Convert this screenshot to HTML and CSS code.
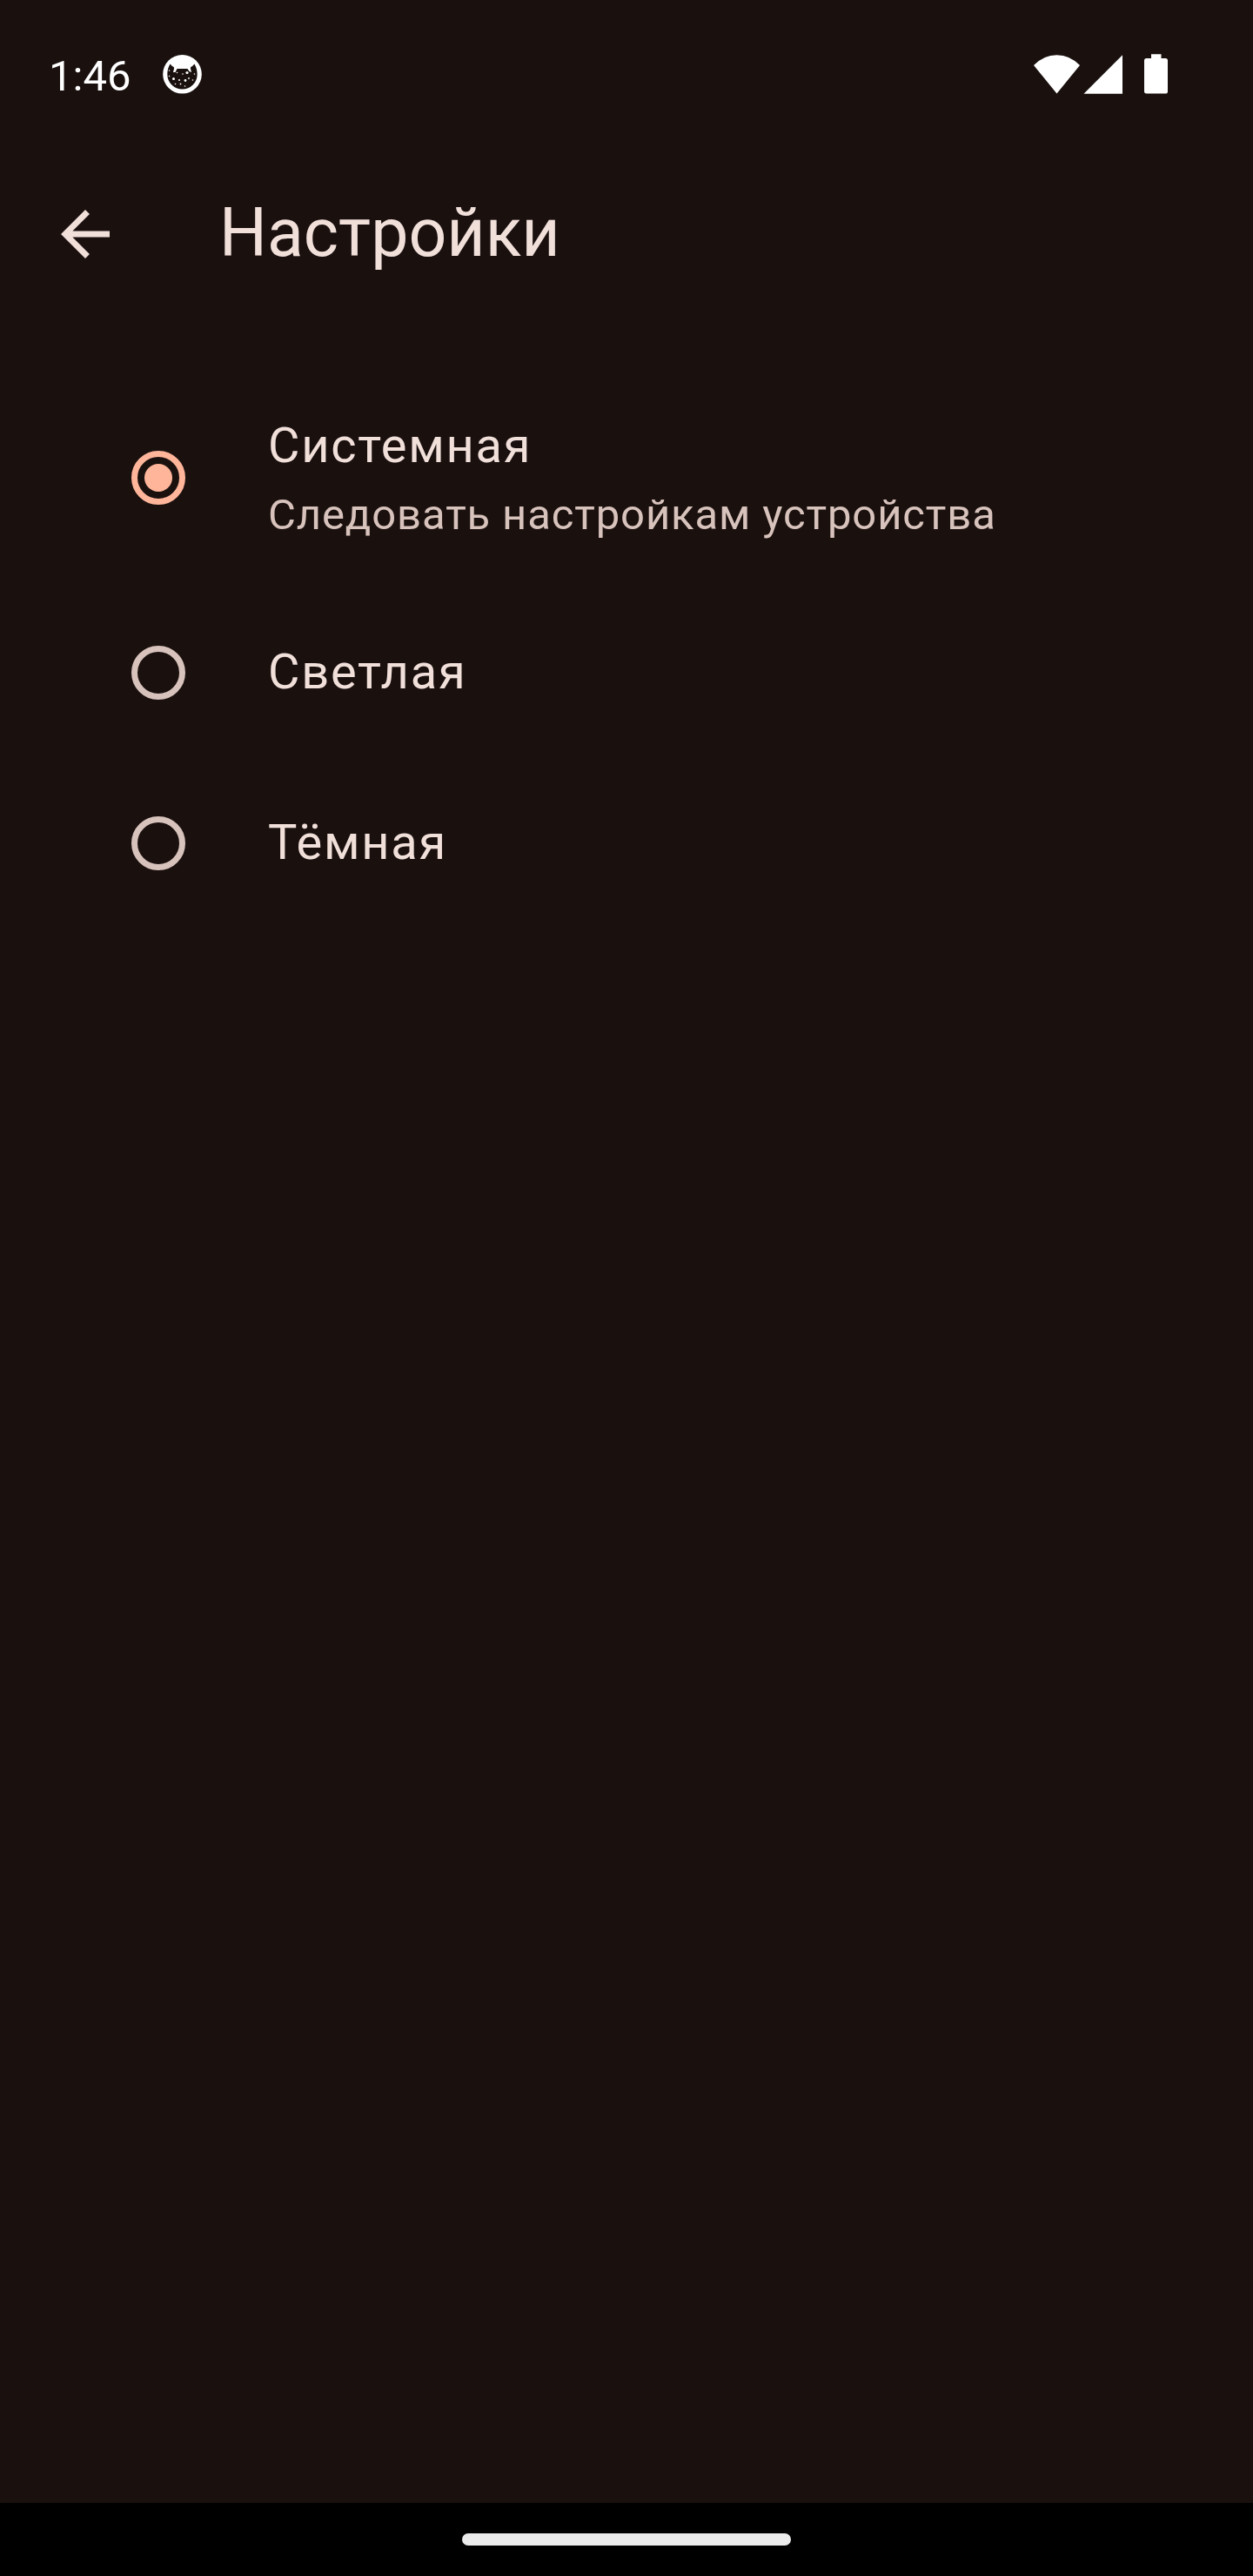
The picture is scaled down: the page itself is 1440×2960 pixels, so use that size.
FILE: index.html
```html
<!DOCTYPE html>
<html lang="ru">
<head>
<meta charset="utf-8">
<title>Настройки</title>
<link rel="stylesheet" href="styles.css">
</head>
<body>
<div class="screen">
  <header class="status">
    <div class="status-left">
      <span class="time">1:46</span>
      <svg class="cat" width="46" height="46" viewBox="0 0 46 46">
        <circle cx="22.500" cy="23.300" r="22.300" fill="#fff"/>
        <path d="M8.500 11.500C11 14.500 15 17 18 17H27C30 17 34 14.500 36.500 11.500C38.500 15 39.700 19 39.700 23.300A17.200 17.200 0 0 1 5.300 23.300C5.300 19 6.500 15 8.500 11.500Z" fill="#1a110f"/>
        <path d="M13 12V17L12 21H14.500L16.500 17L20 16V12ZM32 12V17L33 21L30.500 20L28.500 17L25 16V12Z" fill="#fff"/>
        <g fill="#fff">
          <circle cx="28" cy="21.500" r="1.600"/><circle cx="12.500" cy="28.500" r="1.500"/><circle cx="26" cy="30.500" r="1.400"/>
          <circle cx="7.500" cy="25.500" r=".8"/><circle cx="7.500" cy="19" r=".8"/><circle cx="19" cy="30" r="1"/><circle cx="16.500" cy="21.500" r=".8"/>
          <circle cx="23" cy="23" r=".8"/><circle cx="30" cy="28" r=".9"/><circle cx="34.500" cy="30" r=".8"/><circle cx="36.500" cy="23" r=".8"/>
          <circle cx="20.500" cy="34.500" r=".9"/><circle cx="14.500" cy="34.500" r=".8"/><circle cx="25.500" cy="37" r=".8"/>
        </g>
      </svg>
    </div>
    <svg class="indicators" width="154" height="46" viewBox="0 0 154 46" fill="#fff">
      <path d="M26.500 45.500L0 13Q11.500 1.200 26.500 1.200T53 13Z"/>
      <path d="M57.500 45.700L102 1.200V45.700Z"/>
      <path d="M135 .2H146.500V5H151.500A2.500 2.500 0 0 1 154 7.500V43A2.500 2.500 0 0 1 151.500 45.600H129.500A2.500 2.500 0 0 1 127 43V7.500A2.500 2.500 0 0 1 129.500 5H135Z"/>
    </svg>
  </header>
  <div class="appbar">
    <svg class="back" width="84" height="84" viewBox="0 0 24 24"><path d="M20 11H7.830l5.590-5.590L12 4l-8 8 8 8 1.410-1.410L7.830 13H20v-2z" fill="#f1dfda"/></svg>
    <h1 class="title">Настройки</h1>
  </div>
  <main class="options">
    <div class="option option-tall">
      <span class="radio radio-on"></span>
      <div class="text"><div class="label">Системная</div><div class="hint">Следовать настройкам устройства</div></div>
    </div>
    <div class="option">
      <span class="radio"></span>
      <div class="text text-single"><div class="label">Светлая</div></div>
    </div>
    <div class="option">
      <span class="radio"></span>
      <div class="text text-single"><div class="label">Тёмная</div></div>
    </div>
  </main>
  <footer class="nav"><span class="handle"></span></footer>
</div>
</body>
</html>
```
FILE: styles.css
```css
* { box-sizing: border-box; }
body { margin: 0; background: #1a110f; font-family: Roboto, sans-serif; color: #f1dfda; }
.screen { width: 1440px; height: 2960px; display: flex; flex-direction: column; }
.status { height: 157px; padding: 56px 98px 0 56px; display: flex; justify-content: space-between; }
.status-left { display: flex; }
.time { width: 131px; font-size: 49px; line-height: 63px; color: #fff; }
.cat { margin-top: 6px; }
.indicators { margin-top: 6px; }
.appbar { height: 224px; padding-left: 56px; display: flex; align-items: center; gap: 112px; }
.back { display: block; }
.title { margin: 0; padding-bottom: 2px; font-size: 77px; font-weight: 400; line-height: 98px; }
.options { flex: 1; padding-top: 42px; }
.option { height: 196px; padding-left: 151px; display: flex; align-items: center; gap: 95px; }
.option-tall { height: 252px; }
.text-single { padding-bottom: 2px; }
.radio { width: 62px; height: 62px; border: 7px solid #d8c2bc; border-radius: 50%; display: flex; align-items: center; justify-content: center; }
.radio-on { border-color: #ffb59a; }
.radio-on::after { content: ""; width: 32px; height: 32px; border-radius: 50%; background: #ffb59a; }
.label { font-size: 56px; line-height: 84px; letter-spacing: 1.75px; }
.hint { margin: 1px 0 -1px; font-size: 49px; line-height: 74px; letter-spacing: 0.875px; color: #d8c2bc; }
.nav { height: 84px; background: #000; display: flex; justify-content: center; align-items: center; }
.handle { width: 378px; height: 14px; border-radius: 7px; background: #ebebeb; }
```
